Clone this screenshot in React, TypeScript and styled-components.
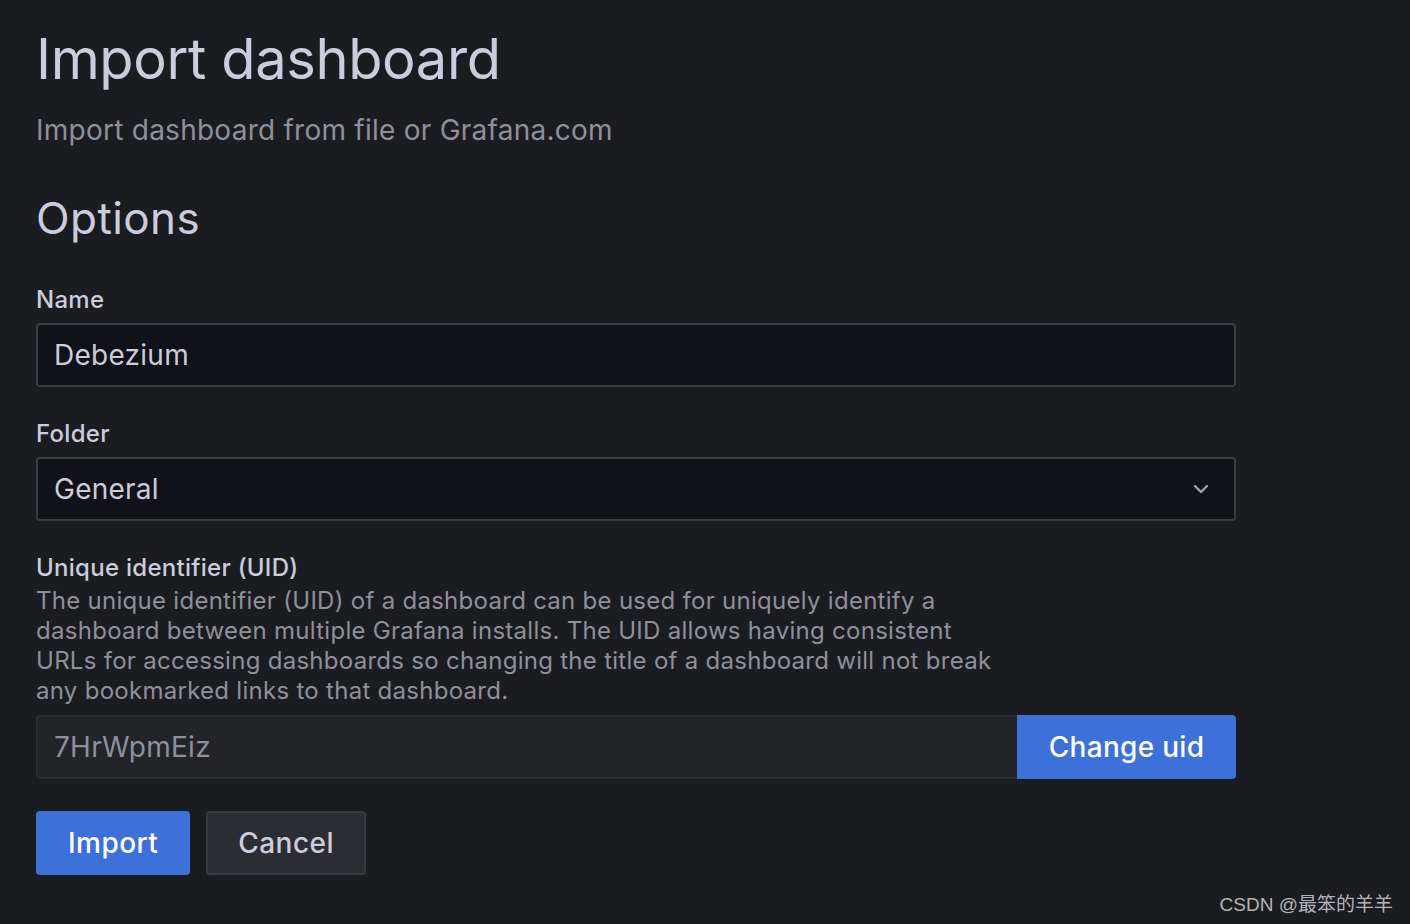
import React from "react";
import styled, { createGlobalStyle } from "styled-components";

const Global = createGlobalStyle`
  html, body { margin: 0; padding: 0; background: #1a1c20; }
  body { font-family: Inter, "Noto Sans", sans-serif; color: #ccccdc; }
  * { box-sizing: border-box; }
`;

const Page = styled.div`
  width: 1410px;
  height: 924px;
  padding: 25px 0 0 36px;
  position: relative;
  overflow: hidden;
`;

const Form = styled.div`
  width: 1200px;
  display: flex;
  flex-direction: column;
`;

const Title = styled.h1`
  margin: 0;
  font-size: 56px;
  font-weight: 400;
  line-height: 68px;
  color: #ccccdc;
  letter-spacing: -0.38px;
`;

const Subtitle = styled.div`
  margin-top: 16px;
  font-size: 28px;
  line-height: 42px;
  letter-spacing: 0.25px;
  color: #8f909a;
`;

const Heading = styled.h2`
  margin: 41px 0 0;
  font-size: 44px;
  font-weight: 400;
  line-height: 52px;
  letter-spacing: 0.4px;
  color: #ccccdc;
`;

const Field = styled.div<{ $top: number }>`
  margin-top: ${(p) => p.$top}px;
  display: flex;
  flex-direction: column;
`;

const Label = styled.label`
  font-size: 24px;
  font-weight: 500;
  line-height: 30px;
  letter-spacing: 0.28px;
  color: #ccccdc;
`;

const Description = styled.div`
  margin-top: 3px;
  font-size: 24px;
  line-height: 30px;
  letter-spacing: 0.28px;
  color: #8f909a;
  max-width: 966px;
`;

const InputBox = styled.div<{ $disabled?: boolean; $select?: boolean }>`
  margin-top: 8px;
  height: 64px;
  display: flex;
  align-items: center;
  padding: 0 ${(p) => (p.$select ? 25 : 16)}px 0 16px;
  background: ${(p) => (p.$disabled ? "#222428" : "#111217")};
  border: 2px solid ${(p) => (p.$disabled ? "#2b2d31" : "#3b3c42")};
  border-radius: 4px;
  font-size: 28px;
  letter-spacing: 0.25px;
  color: ${(p) => (p.$disabled ? "#8f909a" : "#ccccdc")};
`;

const Value = styled.span`
  flex: 1;
`;

const Row = styled.div`
  margin-top: 9px;
  display: flex;
  align-items: stretch;
  height: 64px;
`;

const UidInput = styled(InputBox)`
  margin-top: 0;
  flex: 1;
  border-radius: 4px 0 0 4px;
  border-right: none;
`;

const Button = styled.button<{ $variant: "primary" | "secondary" }>`
  height: 64px;
  padding: 0 30px;
  font-family: Inter, "Noto Sans", sans-serif;
  font-size: 28px;
  font-weight: 500;
  letter-spacing: 0.45px;
  border-radius: 4px;
  cursor: pointer;
  background: ${(p) => (p.$variant === "primary" ? "#3d71d9" : "#2c2d33")};
  color: ${(p) => (p.$variant === "primary" ? "#ffffff" : "#ccccdc")};
  border: 2px solid ${(p) => (p.$variant === "primary" ? "#3d71d9" : "#3a3b41")};
`;

const AttachedButton = styled(Button)`
  border-radius: 0 4px 4px 0;
  width: 219px;
  padding: 0;
  letter-spacing: 0.3px;
`;

const Actions = styled.div`
  margin-top: 32px;
  display: flex;
  gap: 16px;
`;

const Watermark = styled.div`
  position: absolute;
  right: 17px;
  bottom: 8px;
  font-family: "Liberation Sans", "Noto Sans CJK SC", sans-serif;
  font-size: 19px;
  color: #b4b4b8;
`;

const Chevron = () => (
  <svg width="16" height="16" viewBox="0 0 16 16" fill="none">
    <path d="M2 5l6 6 6-6" stroke="#a0a1aa" strokeWidth="2.4" strokeLinecap="round" strokeLinejoin="round" />
  </svg>
);

export default function App() {
  return (
    <Page>
      <Global />
      <Form>
        <Title>Import dashboard</Title>
        <Subtitle>Import dashboard from file or Grafana.com</Subtitle>
        <Heading>Options</Heading>
        <Field $top={41}>
          <Label>Name</Label>
          <InputBox>
            <Value>Debezium</Value>
          </InputBox>
        </Field>
        <Field $top={32}>
          <Label>Folder</Label>
          <InputBox $select>
            <Value>General</Value>
            <Chevron />
          </InputBox>
        </Field>
        <Field $top={32}>
          <Label>Unique identifier (UID)</Label>
          <Description>
            The unique identifier (UID) of a dashboard can be used for uniquely identify a dashboard between multiple
            Grafana installs. The UID allows having consistent URLs for accessing dashboards so changing the title of a
            dashboard will not break any bookmarked links to that dashboard.
          </Description>
          <Row>
            <UidInput $disabled>
              <Value>7HrWpmEiz</Value>
            </UidInput>
            <AttachedButton $variant="primary">Change uid</AttachedButton>
          </Row>
        </Field>
        <Actions>
          <Button $variant="primary">Import</Button>
          <Button $variant="secondary">Cancel</Button>
        </Actions>
      </Form>
      <Watermark>CSDN @最笨的羊羊</Watermark>
    </Page>
  );
}
